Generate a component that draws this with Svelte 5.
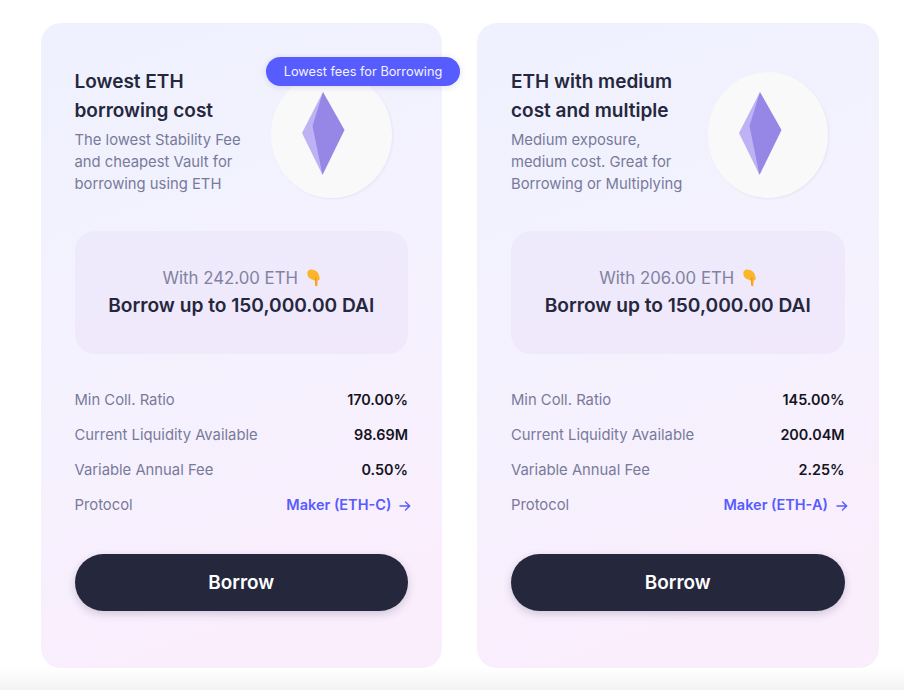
<script>
  const cards = [
    { title: ['Lowest ETH', 'borrowing cost'], desc: ['The lowest Stability Fee', 'and cheapest Vault for', 'borrowing using ETH'], eth: '242.00', ratio: '170.00%', liq: '98.69M', fee: '0.50%', proto: 'Maker (ETH-C)', badge: 'Lowest fees for Borrowing' },
    { title: ['ETH with medium', 'cost and multiple'], desc: ['Medium exposure,', 'medium cost. Great for', 'Borrowing or Multiplying'], eth: '206.00', ratio: '145.00%', liq: '200.04M', fee: '2.25%', proto: 'Maker (ETH-A)', badge: null }
  ];
</script>

<div class="page">
  <div class="cards">
    {#each cards as c}
      <section class="card">
        <header class="head">
          <div class="intro">
            <h2>{c.title[0]}<br />{c.title[1]}</h2>
            <p>{c.desc[0]}<br />{c.desc[1]}<br />{c.desc[2]}</p>
          </div>
          <div class="coin">
            <svg viewBox="0 0 43 83" width="43" height="83" aria-hidden="true">
              <polygon points="21,0 0,41 20.5,83" fill="#bfb2f4" />
              <polygon points="21,0 42.5,38 20.5,83 10.5,34" fill="#9686e6" />
            </svg>
          </div>
          {#if c.badge}<span class="badge">{c.badge}</span>{/if}
        </header>

        <div class="offer">
          <div class="with">
            With {c.eth} ETH
            <svg class="hand" viewBox="0 0 13 18" width="13" height="18" aria-hidden="true">
              <path d="M0.6 2.5 C1.6 0.3 5 0 6.8 1 C9.4 1.6 11.4 3.3 11.9 6 L12.8 9.5 C12.9 10.9 11.2 11.2 10.7 11.6 L10.5 16 C10.4 17.7 8.5 17.7 8.3 16 L7.9 11.4 C5 10.7 2.2 9.7 1.1 7.7 C0.3 6 0.1 3.8 0.6 2.5 Z" fill="#fbb52b" />
              <path d="M8 8.5 L8.3 16 C8.4 17 9.2 17.3 9.6 17 C9.2 15 9.3 11 9.5 8.5 Z" fill="#ee9720" />
            </svg>
          </div>
          <div class="amount">Borrow up to 150,000.00 DAI</div>
        </div>

        <dl class="rows">
          <div class="row"><dt>Min Coll. Ratio</dt><dd>{c.ratio}</dd></div>
          <div class="row"><dt>Current Liquidity Available</dt><dd>{c.liq}</dd></div>
          <div class="row"><dt>Variable Annual Fee</dt><dd>{c.fee}</dd></div>
          <div class="row">
            <dt>Protocol</dt>
            <dd class="link">
              {c.proto}
              <svg viewBox="0 0 12 12" width="12" height="12" aria-hidden="true">
                <path d="M1 6 H10.5 M6.5 2 L10.7 6 L6.5 10" fill="none" stroke="currentColor" stroke-width="1.4" stroke-linecap="round" stroke-linejoin="round" />
              </svg>
            </dd>
          </div>
        </dl>

        <button class="borrow">Borrow</button>
      </section>
    {/each}
  </div>
  <div class="fade"></div>
</div>

<style>
  :global(body) { margin: 0; background: #fff; }
  .page {
    width: 904px;
    height: 690px;
    overflow: hidden;
    font-family: Inter, "Liberation Sans", sans-serif;
    padding-top: 23px;
    box-sizing: border-box;
    display: flex;
    flex-direction: column;
  }
  .cards {
    display: flex;
    gap: 35px;
    padding-left: 40.5px;
    height: 645px;
    flex: none;
  }
  .card {
    width: 401.5px;
    box-sizing: border-box;
    padding: 44px 34px 0 34px;
    border-radius: 20px;
    background: linear-gradient(160deg, #eff1fe 0%, #f4f2fe 45%, #faeefd 85%);
  }
  .head {
    position: relative;
    display: flex;
    justify-content: space-between;
    height: 164px;
  }
  h2 {
    margin: 0;
    font-size: 19px;
    line-height: 29px;
    font-weight: 600;
    color: #25273d;
  }
  .intro p {
    margin: 4px 0 0;
    font-size: 14.8px;
    line-height: 22px;
    color: #787a9b;
  }
  .coin {
    position: absolute;
    left: 196.5px;
    top: 5px;
    width: 120.5px;
    height: 126px;
    border-radius: 50%;
    background: #f9f9f9;
    box-shadow: 1px 1px 2px rgba(190, 185, 215, 0.22);
    display: flex;
    justify-content: center;
    align-items: center;
  }
  .coin svg { margin: 0 0 4px -15px; }
  .badge {
    position: absolute;
    left: 191.5px;
    top: -10px;
    width: 194px;
    height: 29px;
    box-sizing: border-box;
    border-radius: 15px;
    background: #575cfe;
    color: #f3f3ff;
    font-size: 12.75px;
    line-height: 29px;
    text-align: center;
    box-shadow: 0 1px 6px rgba(80, 80, 160, 0.18);
    white-space: nowrap;
  }
  .offer {
    height: 123px;
    width: 333.5px;
    box-sizing: border-box;
    padding-top: 36px;
    border-radius: 20px;
    background: linear-gradient(170deg, #edeafc, #f1e8fb);
    text-align: center;
  }
  .with {
    font-size: 16.8px;
    line-height: 22px;
    color: #80829f;
    display: flex;
    justify-content: center;
    align-items: center;
    gap: 9px;
  }
  .amount {
    margin-top: 3px;
    font-size: 19.15px;
    line-height: 26px;
    font-weight: 600;
    color: #25273d;
  }
  .rows {
    margin: 28px 0 0;
    width: 333.5px;
  }
  .row {
    display: flex;
    justify-content: space-between;
    align-items: baseline;
    height: 35px;
    line-height: 35px;
    font-size: 14.8px;
  }
  dt { color: #787a9b; }
  dd { margin: 0; font-size: 14.4px; font-weight: 600; color: #14141f; }
  dd.link {
    color: #575cfe;
    font-size: 14.5px;
    margin-right: -3px;
  }
  dd.link svg {
    margin-left: 4px;
    vertical-align: -1.5px;
  }
  .borrow {
    display: block;
    margin-top: 32px;
    width: 333.5px;
    height: 57px;
    border: 0;
    border-radius: 29px;
    background: #25273d;
    color: #fff;
    font-family: inherit;
    font-size: 18.9px;
    font-weight: 600;
    box-shadow: 0 3px 8px rgba(37, 39, 61, 0.2);
  }
  .fade {
    flex: 1;
    background: linear-gradient(#fff, #f3f3f3);
  }
</style>
